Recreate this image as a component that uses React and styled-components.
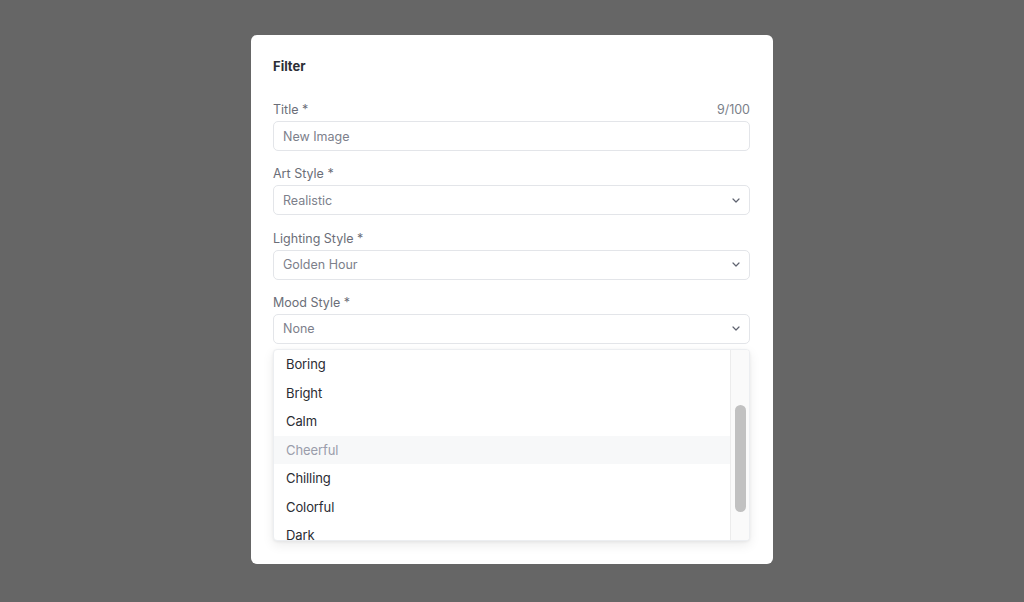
import React from "react";
import styled, { createGlobalStyle } from "styled-components";

const Global = createGlobalStyle`
  html, body { margin: 0; padding: 0; }
  body { font-family: Inter, "Noto Sans", sans-serif; background: #666666; }
`;

const Overlay = styled.div`
  width: 1024px;
  height: 602px;
  background: #666666;
  display: flex;
  justify-content: center;
  align-items: flex-start;
  padding-top: 35px;
  box-sizing: border-box;
`;

const Modal = styled.div`
  width: 522px;
  height: 529px;
  background: #ffffff;
  border-radius: 6px;
  box-sizing: border-box;
  padding: 23px 23px 0 22px;
  position: relative;
  display: flex;
  flex-direction: column;
  gap: 28px;
`;

const Heading = styled.h2`
  margin: 0;
  font-size: 13px;
  font-weight: 700;
  color: #2d2f36;
  line-height: 16px;
`;

const Form = styled.div`
  display: flex;
  flex-direction: column;
  gap: 15.3px;
`;

const Field = styled.div`
  display: flex;
  flex-direction: column;
  gap: 3px;
`;

const LabelRow = styled.div`
  display: flex;
  justify-content: space-between;
  align-items: center;
  height: 16px;
  font-size: 12.5px;
  line-height: 16px;
  color: #6b6e78;
`;

const Counter = styled.span`
  color: #7b7f8a;
`;

const Control = styled.div`
  height: 30px;
  box-sizing: border-box;
  border: 1px solid #e3e5e9;
  border-radius: 5px;
  display: flex;
  align-items: center;
  justify-content: space-between;
  padding: 0 9px 0 9px;
  font-size: 12.5px;
  color: #7d808b;
  background: #fff;
`;

const Chevron = () => (
  <svg width="8" height="5" viewBox="0 0 8 5" fill="none">
    <path d="M1 1l3 3 3-3" stroke="#5f6370" strokeWidth="1.2" strokeLinecap="round" strokeLinejoin="round" />
  </svg>
);

const Dropdown = styled.div`
  position: absolute;
  left: 22px;
  top: 314px;
  width: 477px;
  height: 192px;
  box-sizing: border-box;
  background: #fff;
  border: 1px solid #eceef1;
  border-radius: 4px;
  box-shadow: 0 4px 12px rgba(0, 0, 0, 0.08), 0 1px 3px rgba(0, 0, 0, 0.06);
  display: flex;
  overflow: hidden;
`;

const List = styled.div`
  flex: 1;
  overflow: hidden;
  display: flex;
  flex-direction: column;
`;

const Item = styled.div`
  height: 28.5px;
  flex: none;
  display: flex;
  align-items: center;
  padding-left: 12px;
  font-size: 13px;
  letter-spacing: -0.1px;
  color: ${(p) => (p.$active ? "#9a9dab" : "#2a2c33")};
  background: ${(p) => (p.$active ? "#f7f8f9" : "transparent")};
`;

const Track = styled.div`
  width: 19px;
  flex: none;
  border-left: 1px solid #ececec;
  background: #fafafa;
  display: flex;
  flex-direction: column;
  align-items: center;
  padding-top: 55px;
  box-sizing: border-box;
`;

const Thumb = styled.div`
  width: 11px;
  height: 107px;
  border-radius: 6px;
  background: #c1c1c1;
`;

const fields = [
  { label: "Title *", value: "New Image", counter: "9/100" },
  { label: "Art Style *", value: "Realistic", select: true },
  { label: "Lighting Style *", value: "Golden Hour", select: true },
  { label: "Mood Style *", value: "None", select: true },
];

const options = ["Boring", "Bright", "Calm", "Cheerful", "Chilling", "Colorful", "Dark"];

export default function App() {
  return (
    <>
      <Global />
      <Overlay>
        <Modal>
          <Heading>Filter</Heading>
          <Form>
            {fields.map((f) => (
              <Field key={f.label}>
                <LabelRow>
                  <span>{f.label}</span>
                  {f.counter && <Counter>{f.counter}</Counter>}
                </LabelRow>
                <Control>
                  <span>{f.value}</span>
                  {f.select && <Chevron />}
                </Control>
              </Field>
            ))}
          </Form>
          <Dropdown>
            <List>
              {options.map((o) => (
                <Item key={o} $active={o === "Cheerful"}>
                  {o}
                </Item>
              ))}
            </List>
            <Track>
              <Thumb />
            </Track>
          </Dropdown>
        </Modal>
      </Overlay>
    </>
  );
}
